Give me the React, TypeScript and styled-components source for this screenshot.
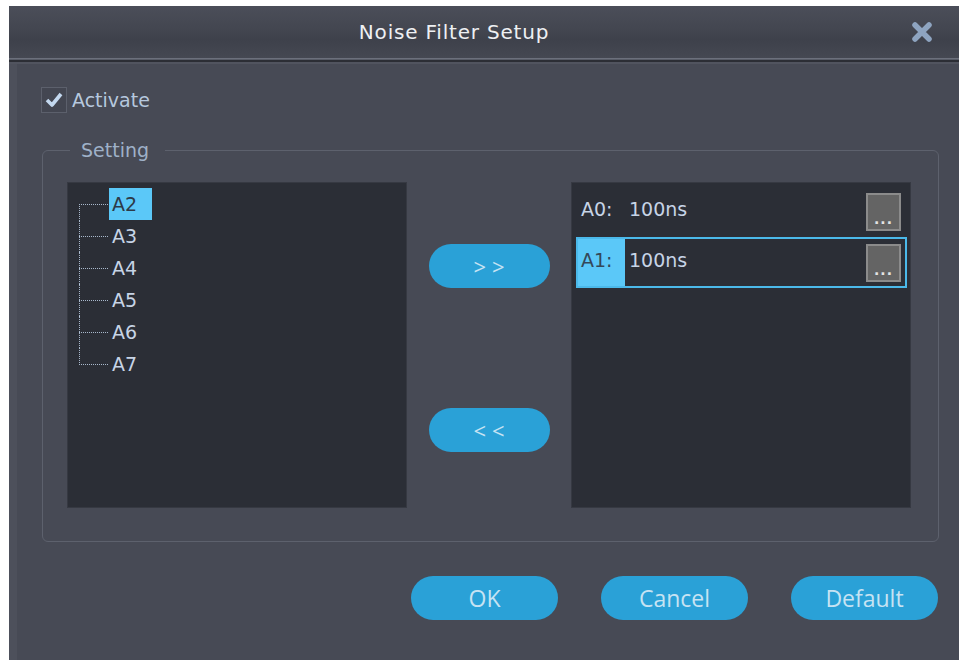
import React from "react";
import styled, { createGlobalStyle } from "styled-components";

const GlobalStyle = createGlobalStyle`
  html, body {
    margin: 0;
    background: #ffffff;
  }
  body {
    font-family: "DejaVu Sans", "Liberation Sans", sans-serif;
  }
`;

const Dialog = styled.div`
  margin: 6px 0 0 9px;
  width: 950px;
  height: 654px;
  background: #474a55;
  display: flex;
  flex-direction: column;
  overflow: hidden;
`;

const TitleBar = styled.div`
  height: 52px;
  display: flex;
  align-items: center;
  background: linear-gradient(
    to bottom,
    #4b4e59 0%,
    #434650 45%,
    #3e414b 65%,
    #454852 100%
  );
`;

const Title = styled.div`
  flex: 1;
  text-align: center;
  color: #eef0f3;
  font-size: 20px;
  letter-spacing: 0.8px;
`;

const CloseButton = styled.div`
  width: 60px;
  height: 100%;
  display: flex;
  align-items: center;
  padding-left: 12px;
  box-sizing: border-box;
`;

const Separator = styled.div`
  height: 6px;
  background: linear-gradient(
    to bottom,
    #6c707c 0px,
    #6c707c 1px,
    #585c67 1px,
    #585c67 2px,
    #2c2e35 2px,
    #2c2e35 4px,
    #51545f 4px,
    #51545f 6px
  );
`;

const Body = styled.div`
  flex: 1;
  border-left: 8px solid #4d505b;
  padding: 23px 20px 0 25px;
  display: flex;
  flex-direction: column;
`;

const CheckRow = styled.label`
  display: flex;
  align-items: center;
  gap: 5px;
  margin-left: -1px;
  color: #b6c8de;
  font-size: 19px;
  height: 26px;
`;

const CheckBox = styled.span`
  width: 26px;
  height: 26px;
  box-sizing: border-box;
  border: 1px solid #5c606c;
  background: #434651;
  display: flex;
  align-items: center;
  justify-content: center;
`;

const Group = styled.fieldset`
  margin: 26px 0 0 0;
  padding: 0 27px 33px 24px;
  border: 1px solid #5d616d;
  border-radius: 6px;
  min-width: 0;
`;

const Legend = styled.legend`
  margin-left: 3px;
  padding: 0 16px 0 11px;
  color: #9fb1c8;
  font-size: 19px;
  line-height: 22px;
`;

const Columns = styled.div`
  margin-top: 21px;
  display: grid;
  grid-template-columns: 340px 164px 340px;
  height: 326px;
`;

const Panel = styled.div`
  background: #2b2e36;
  border: 1px solid #363942;
  box-sizing: border-box;
`;

const Tree = styled.ul`
  list-style: none;
  margin: 0;
  padding: 5px 0 0 41px;
`;

const TreeItem = styled.li<{ $first?: boolean; $last?: boolean }>`
  position: relative;
  height: 32px;
  display: flex;
  align-items: center;

  &::before {
    content: "";
    position: absolute;
    left: -30px;
    top: 16px;
    width: 29px;
    border-top: 1px dotted #a9b9cd;
  }

  &::after {
    content: "";
    position: absolute;
    left: -30px;
    top: ${(p) => (p.$first ? "16px" : "0")};
    height: ${(p) => (p.$first || p.$last ? "17px" : "32px")};
    border-left: 1px dotted #a9b9cd;
  }
`;

const NodeLabel = styled.span<{ $selected?: boolean }>`
  height: 32px;
  padding: 0 15px 0 3px;
  display: flex;
  align-items: center;
  font-size: 19px;
  color: ${(p) => (p.$selected ? "#2d3a48" : "#c7d4e6")};
  background: ${(p) => (p.$selected ? "#5bc8f8" : "transparent")};
`;

const Middle = styled.div`
  display: flex;
  flex-direction: column;
  align-items: center;
  padding-top: 62px;
  gap: 120px;
`;

const PillButton = styled.button<{ $width: number }>`
  width: ${(p) => p.$width}px;
  height: 44px;
  border: none;
  border-radius: 22px;
  background: #2aa1d7;
  color: #c6e3f3;
  font-family: "Open Sans", "Liberation Sans", sans-serif;
  font-size: 23px;
  padding: 0;
  cursor: pointer;
`;

const ArrowButton = styled(PillButton)`
  font-size: 22px;
  letter-spacing: 6px;
  text-indent: 6px;
`;

const FilterList = styled.div`
  padding: 3px 3px 0 4px;
  display: flex;
  flex-direction: column;
`;

const FilterRow = styled.div<{ $selected?: boolean }>`
  height: 51px;
  box-sizing: border-box;
  border: 2px solid ${(p) => (p.$selected ? "#4bb9ea" : "transparent")};
  display: flex;
  align-items: stretch;
  font-size: 19px;
`;

const ChannelName = styled.span<{ $selected?: boolean }>`
  width: 47px;
  padding: 0 0 6px 3px;
  box-sizing: border-box;
  display: flex;
  align-items: center;
  color: ${(p) => (p.$selected ? "#34485a" : "#c7d4e6")};
  background: ${(p) => (p.$selected ? "#5bc8f8" : "transparent")};
`;

const FilterValue = styled.span`
  flex: 1;
  padding: 0 0 6px 4px;
  display: flex;
  align-items: center;
  color: #c7d4e6;
`;

const MoreButton = styled.span`
  align-self: center;
  width: 35px;
  height: 38px;
  margin-right: 4px;
  box-sizing: border-box;
  border: 2px solid #8b8b8b;
  background: #646464;
  color: #e4e4e4;
  font-size: 14px;
  font-weight: bold;
  letter-spacing: 1px;
  display: flex;
  align-items: flex-end;
  justify-content: center;
  padding-bottom: 2px;
`;

const Footer = styled.div`
  margin-top: 34px;
  margin-right: 1px;
  display: flex;
  justify-content: flex-end;
  gap: 43px;
`;

const channels = ["A2", "A3", "A4", "A5", "A6", "A7"];

const filters = [
  { name: "A0:", value: "100ns", selected: false },
  { name: "A1:", value: "100ns", selected: true },
];

const App = () => (
  <>
    <GlobalStyle />
    <Dialog>
      <TitleBar>
        <Title>Noise Filter Setup</Title>
        <CloseButton>
          <svg width="22" height="22" viewBox="0 0 22 22">
            <path
              d="M4 4 L18 18 M18 4 L4 18"
              stroke="#8ea4c0"
              strokeWidth="5.5"
              strokeLinecap="round"
            />
          </svg>
        </CloseButton>
      </TitleBar>
      <Separator />

      <Body>
        <CheckRow>
          <CheckBox>
            <svg width="22" height="22" viewBox="0 0 22 22">
              <polyline
                points="4,11 9,16 18,5"
                fill="none"
                stroke="#c3d8ef"
                strokeWidth="3.6"
                strokeLinejoin="round"
              />
            </svg>
          </CheckBox>
          Activate
        </CheckRow>

        <Group>
          <Legend>Setting</Legend>
          <Columns>
            <Panel>
              <Tree>
                {channels.map((ch, i) => (
                  <TreeItem
                    key={ch}
                    $first={i === 0}
                    $last={i === channels.length - 1}
                  >
                    <NodeLabel $selected={i === 0}>{ch}</NodeLabel>
                  </TreeItem>
                ))}
              </Tree>
            </Panel>

            <Middle>
              <ArrowButton $width={121}>&gt;&gt;</ArrowButton>
              <ArrowButton $width={121}>&lt;&lt;</ArrowButton>
            </Middle>

            <Panel>
              <FilterList>
                {filters.map((f) => (
                  <FilterRow key={f.name} $selected={f.selected}>
                    <ChannelName $selected={f.selected}>{f.name}</ChannelName>
                    <FilterValue>{f.value}</FilterValue>
                    <MoreButton>...</MoreButton>
                  </FilterRow>
                ))}
              </FilterList>
            </Panel>
          </Columns>
        </Group>

        <Footer>
          <PillButton $width={147}>OK</PillButton>
          <PillButton $width={147}>Cancel</PillButton>
          <PillButton $width={147}>Default</PillButton>
        </Footer>
      </Body>
    </Dialog>
  </>
);

export default App;
